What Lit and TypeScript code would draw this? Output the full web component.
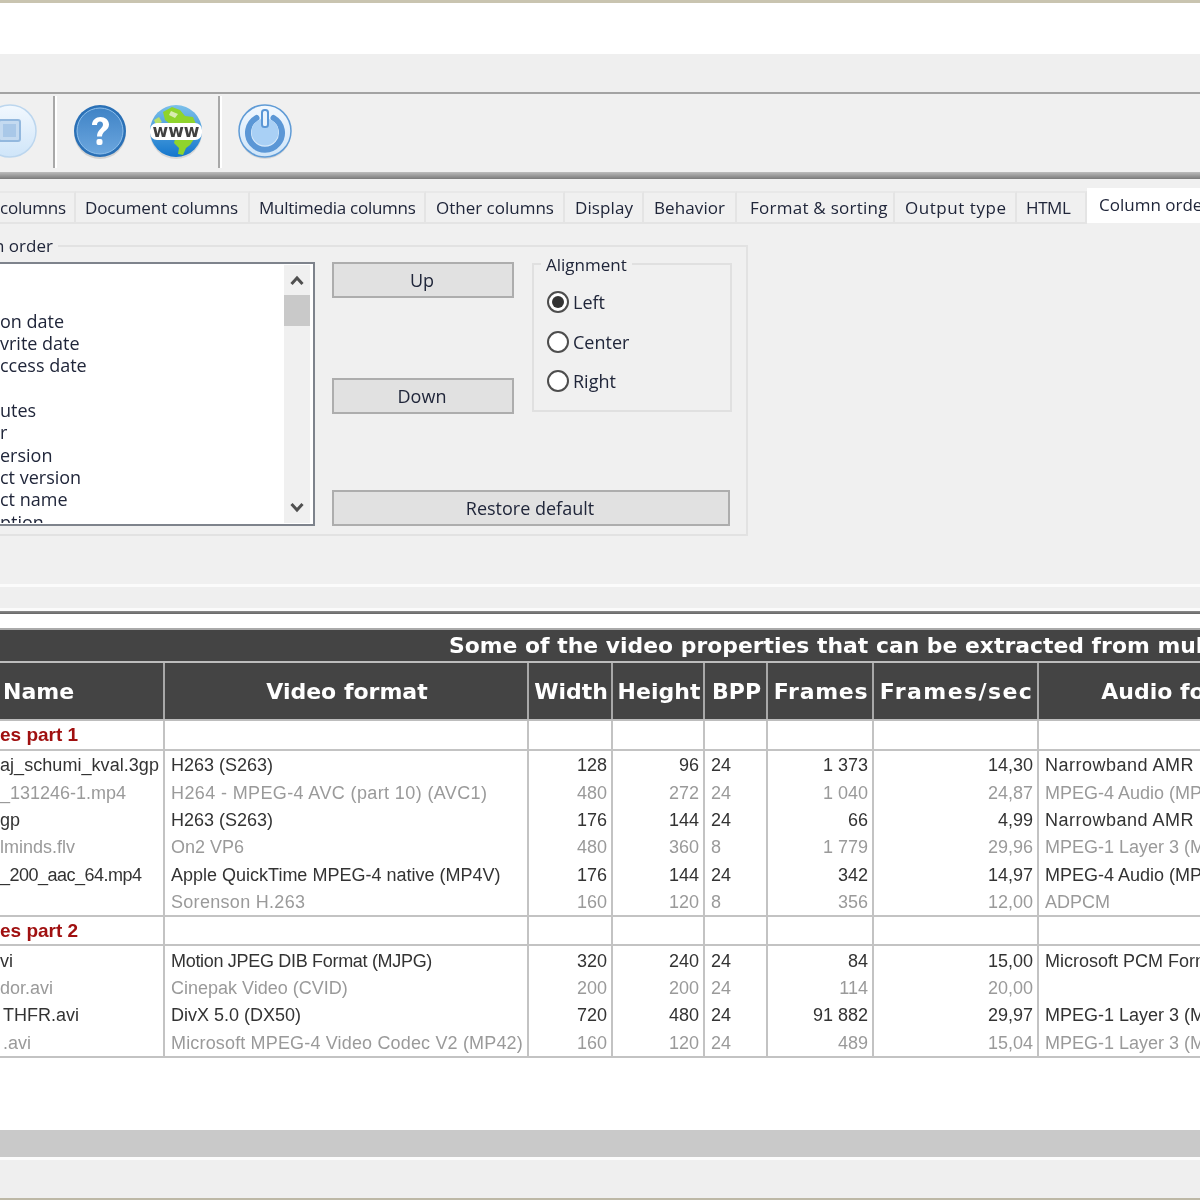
import { LitElement, html, css, svg } from "lit";
import { customElement } from "lit/decorators.js";

const TABS: [string, number, number, number][] = [
  ["columns", 76, 0, -0.2], ["Document columns", 174, 9, -0.1], ["Multimedia columns", 176, 9, -0.28], ["Other columns", 139, 10, 0],
  ["Display", 79, 10, 0.1], ["Behavior", 93, 10, 0.1], ["Format & sorting", 158, 13, 0.25], ["Output type", 122, 10, 0.55], ["HTML", 70, 9, -0.4],
];
const LIST: string[] = ["", "", "on date", "vrite date", "ccess date", "", "utes", "r", "ersion", "ct version", "ct name", "ption"];
const TRACK: Record<string, number> = {
  "H264 - MPEG-4 AVC (part 10) (AVC1)": 0.38,
  "Motion JPEG DIB Format (MJPG)": -0.31,
  "Microsoft MPEG-4 Video Codec V2 (MP42)": 0.16,
  "Sorenson H.263": 0.3,
  "Narrowband AMR (": 0.5,
  "_200_aac_64.mp4": -0.5,
  "aj_schumi_kval.3gp": 0.05,
};
type Row = [string, number, string, string, string, string, string, string, string];
const G1: Row[] = [
  ["aj_schumi_kval.3gp", 0, "H263 (S263)", "128", "96", "24", "1 373", "14,30", "Narrowband AMR ("],
  ["_131246-1.mp4", 0, "H264 - MPEG-4 AVC (part 10) (AVC1)", "480", "272", "24", "1 040", "24,87", "MPEG-4 Audio (MP"],
  ["gp", 0, "H263 (S263)", "176", "144", "24", "66", "4,99", "Narrowband AMR ("],
  ["lminds.flv", 0, "On2 VP6", "480", "360", "8", "1 779", "29,96", "MPEG-1 Layer 3 (M"],
  ["_200_aac_64.mp4", 0, "Apple QuickTime MPEG-4 native (MP4V)", "176", "144", "24", "342", "14,97", "MPEG-4 Audio (MP"],
  ["", 0, "Sorenson H.263", "160", "120", "8", "356", "12,00", "ADPCM"],
];
const G2: Row[] = [
  ["vi", 0, "Motion JPEG DIB Format (MJPG)", "320", "240", "24", "84", "15,00", "Microsoft PCM Forn"],
  ["dor.avi", 0, "Cinepak Video (CVID)", "200", "200", "24", "114", "20,00", ""],
  ["THFR.avi", 3, "DivX 5.0 (DX50)", "720", "480", "24", "91 882", "29,97", "MPEG-1 Layer 3 (M"],
  [".avi", 3, "Microsoft MPEG-4 Video Codec V2 (MP42)", "160", "120", "24", "489", "15,04", "MPEG-1 Layer 3 (M"],
];

const defs = svg`<defs>
  <linearGradient id="blueIn" x1="0" y1="0" x2="0" y2="1"><stop offset="0" stop-color="#3f83c6"/><stop offset="1" stop-color="#6ba6de"/></linearGradient>
  <linearGradient id="sea" x1="0" y1="0" x2="0" y2="1"><stop offset="0" stop-color="#7cc0ea"/><stop offset="1" stop-color="#1476cc"/></linearGradient>
  <linearGradient id="pale" x1="0" y1="0" x2="0" y2="1"><stop offset="0" stop-color="#f2f8fe"/><stop offset="1" stop-color="#cfe5f9"/></linearGradient>
</defs>`;

@customElement("app-root")
export class AppRoot extends LitElement {
  static styles = css`
    :host { display: block; width: 1200px; height: 1200px; overflow: hidden; background: #fff; font-family: "Open Sans", sans-serif; color: #20263a; filter: blur(0.45px); }
    .edge { height: 3px; background: #c9c4b0; }
    .white-top { height: 51px; background: #fff; }
    .menu { height: 38px; background: #efefef; }
    .toolbar { height: 80px; box-sizing: border-box; background: #f0f0f0; border-top: 2px solid #a3a3a3; padding-bottom: 4px; display: flex; align-items: center; }
    .toolbar svg { flex: none; display: block; width: 54px; height: 56px; }
    .sep { flex: none; width: 2px; height: 72px; background: #a8a8a8; border-right: 2px solid #fff; margin-top: 1px; }
    .i0 { margin-left: -17px; }
    .s1 { margin-left: 16px; }
    .i1 { margin-left: 16px; }
    .i2 { margin-left: 22px; }
    .s2 { margin-left: 15px; }
    .i3 { margin-left: 16px; }
    .rule { height: 7px; background: linear-gradient(#bdbdbd, #7a7a7a); }
    .tabsbar { height: 66px; background: #f0f0f0; box-sizing: border-box; padding-top: 12px; display: flex; align-items: flex-start; font-size: 17px; white-space: nowrap; overflow: hidden; }
    .tab { flex: none; box-sizing: border-box; height: 33px; border: 2px solid #e4e4e4; border-left: none; border-top-color: #e8e8e8; line-height: 29px; }
    .tab.active { height: 35px; margin-top: -3px; background: #fff; border: none; width: 120px; padding-left: 12px; line-height: 33px; }
    .page { height: 339px; background: #f0f0f0; box-sizing: border-box; }
    .group { position: relative; box-sizing: border-box; width: 758px; height: 291px; margin-left: -10px; border: 2px solid #e2e2e2; font-size: 18px; display: flex; }
    .legend { position: absolute; top: -14px; left: 2px; padding: 0 5px 0 0; background: #f0f0f0; line-height: 26px; font-size: 17px; }
    .listbox { flex: none; box-sizing: border-box; width: 323px; height: 264px; margin-top: 15px; border: 2px solid #7e838c; background: #fff; display: flex; padding: 1px 3px 1px 0; }
    .items { flex: 1; overflow: hidden; line-height: 22.35px; white-space: nowrap; }
    .item { height: 22.35px; padding-left: 6px; }
    .scroll { flex: none; width: 26px; background: #f0f0f0; display: flex; flex-direction: column; }
    .scroll svg { display: block; width: 26px; height: 30px; flex: none; }
    .thumb { flex: none; height: 31px; background: #c9c9c9; }
    .spacer { flex: 1; }
    .mid { flex: none; position: relative; width: 398px; margin: 15px 0 0 17px; height: 264px; }
    .btns { display: flex; flex-direction: column; width: 398px; height: 264px; }
    .btn { box-sizing: border-box; height: 36px; width: 182px; background: #e1e1e1; border: 2px solid #adadad; text-align: center; line-height: 33px; padding-right: 2px; }
    .btn + .btn { margin-top: 80px; }
    .btn.wide { width: 398px; margin-top: 76px; }
    .align { position: absolute; top: 1px; left: 200px; box-sizing: border-box; width: 200px; height: 149px; border: 2px solid #e0e0e0; }
    .align .legend { left: 7px; padding: 0 5px; top: -13px; }
    .radios { display: flex; flex-direction: column; gap: 17.5px; padding: 26px 0 0 13px; }
    .radio { display: flex; align-items: center; gap: 4px; height: 22px; line-height: 22px; }
    .dot { flex: none; box-sizing: border-box; width: 22px; height: 22px; border-radius: 50%; border: 2px solid #4d4d4d; background: #fff; display: flex; align-items: center; justify-content: center; }
    .dot.on::after { content: ""; width: 12px; height: 12px; border-radius: 50%; background: #333; }
    .lines { height: 27px; background: #efefef; box-sizing: border-box; border-top: 3px solid #fbfbfb; border-bottom: 3px solid #fbfbfb; }
    .dark { height: 3px; background: linear-gradient(#8a8a8a, #666); }
    .sheet { height: 516px; background: #fff; box-sizing: border-box; padding-top: 14px; overflow: hidden; }
    table { border-collapse: collapse; table-layout: fixed; width: 1326px; margin-left: -2px; font-family: "Liberation Sans", sans-serif; font-size: 18px; color: #333; }
    td, th { border-left: 2px solid #c3c3c3; border-right: 2px solid #c3c3c3; padding: 0 4px 0 6px; white-space: nowrap; overflow: hidden; }
    th { background: #444; color: #fff; font-family: "DejaVu Sans", sans-serif; font-size: 22px; font-weight: 700; border-color: #a8a8a8; border-bottom: 2px solid #bdbdbd; padding: 0 0 0 2px; text-align: center; }
    .title th { height: 31px; text-align: left; padding-left: 449px; font-size: 21.9px; border-top: 2px solid #aaa; }
    .head th { height: 56px; }
    .head th.name { text-align: left; padding-left: 3px; }
    .head th.sp1 { letter-spacing: 0.7px; }
    .head th.sp2 { letter-spacing: 1.4px; }
    .gr td { height: 28px; font-weight: 700; font-size: 19px; color: #a01010; border-bottom: 2px solid #c3c3c3; border-top: 2px solid #c3c3c3; }
    .gr.short td { height: 27px; }
    .d td { height: 26.4px; padding-top: 1px; line-height: 20px; }
    .d.alt td { color: #9a9a9a; }
    .d:last-child td { border-bottom: 2px solid #c3c3c3; }
    .n { text-align: right; }
    td.first { padding-left: 0; }
    .bar { height: 27px; background: #c9c9c9; }
    .wl { height: 3px; background: #fbfbfb; }
    .status { height: 38px; background: #efefef; }
    .edge2 { height: 2px; background: #bdb8a6; }
  `;

  renderIcon0() {
    return html`<svg class="i0" viewBox="0 0 54 56">${defs}
      <circle cx="27" cy="28" r="26" fill="url(#pale)" stroke="#bcd6ee" stroke-width="1.5"/>
      <rect x="16" y="17" width="21" height="21" rx="2" fill="#c4daf0" stroke="#93b8de" stroke-width="2"/>
      <rect x="20" y="21" width="13" height="13" fill="#a9c8e8"/>
    </svg>`;
  }
  renderHelp() {
    return html`<svg class="i1" viewBox="0 0 54 56">${defs}
      <ellipse cx="27" cy="30" rx="26" ry="26" fill="#000" opacity=".12"/>
      <circle cx="27" cy="28" r="26" fill="#2a70b6"/>
      <circle cx="27" cy="28" r="23" fill="url(#blueIn)" stroke="#8fc0ec" stroke-width="1"/>
      <path d="M19 22c0-5 4-8 8.500-8s8.500 3 8.500 7.500c0 6-7 6.500-7 12h-5c0-7 6-8 6-12 0-1.800-1.200-3-3-3s-3 1.500-3 3.500z" fill="#fff"/>
      <rect x="23.500" y="36" width="6" height="6" rx="2" fill="#fff"/>
    </svg>`;
  }
  renderGlobe() {
    return html`<svg class="i2" viewBox="0 0 54 56">${defs}
      <ellipse cx="27" cy="30" rx="26" ry="26" fill="#000" opacity=".1"/>
      <circle cx="27" cy="28" r="26" fill="url(#sea)"/>
      <path d="M14 9l9-5 8 3 5 6 8 1 3 7-6 2-4-3-4 3-7-3-5 1-5-4z" fill="#8fd42c"/>
      <path d="M22 8l7 3-3 4-6-3z" fill="#d9ecb0"/>
      <path d="M26 36l14-1 5 1-4 6-4 3-3 7-5-1 1-6-5-5z" fill="#8fd42c"/>
      <path d="M5 17l5-3 3 5-6 3z" fill="#b6e06a"/>
      <rect x="1" y="20" width="52" height="17" rx="7" fill="#fff"/>
      <text x="27" y="34" text-anchor="middle" font-family="DejaVu Sans, sans-serif" font-size="17" font-weight="700" fill="#404040" textLength="47" lengthAdjust="spacingAndGlyphs">www</text>
    </svg>`;
  }
  renderPower() {
    return html`<svg class="i3" viewBox="0 0 54 56">${defs}
      <ellipse cx="27" cy="30" rx="26" ry="26" fill="#000" opacity=".1"/>
      <circle cx="27" cy="28" r="26" fill="url(#pale)" stroke="#5f9bd6" stroke-width="1.5"/>
      <path d="M18.500 15a17 17 0 1 0 17 0" fill="none" stroke="#5b97d6" stroke-width="6" stroke-linecap="round"/>
      <circle cx="27" cy="29" r="13.500" fill="#a9d0f5"/>
      <rect x="24" y="7" width="6" height="17" rx="2.500" fill="#eaf4fd" stroke="#5b97d6" stroke-width="2"/>
    </svg>`;
  }

  track(t: string) {
    return html`<span style="letter-spacing:${TRACK[t] ?? 0}px">${t}</span>`;
  }
  renderRow(r: Row, alt: boolean) {
    return html`<tr class="d ${alt ? "alt" : ""}">
      <td class="first"><span style="margin-left:${r[1]}px;letter-spacing:${TRACK[r[0]] ?? 0}px">${r[0]}</span></td>
      <td>${this.track(r[2])}</td><td class="n">${r[3]}</td><td class="n">${r[4]}</td><td>${r[5]}</td><td class="n">${r[6]}</td><td class="n">${r[7]}</td><td>${this.track(r[8])}</td>
    </tr>`;
  }
  renderGroup(t: string, short = false) {
    return html`<tr class="gr ${short ? "short" : ""}"><td class="first">${t}</td><td></td><td></td><td></td><td></td><td></td><td></td><td></td></tr>`;
  }

  render() {
    return html`
      <div class="edge"></div><div class="white-top"></div><div class="menu"></div>
      <div class="toolbar">
        ${this.renderIcon0()}<div class="sep s1"></div>${this.renderHelp()}${this.renderGlobe()}<div class="sep s2"></div>${this.renderPower()}
      </div>
      <div class="rule"></div>
      <div class="tabsbar">
        ${TABS.map(([t, w, p, s]) => html`<div class="tab" style="width:${w}px;padding-left:${p}px;letter-spacing:${s}px">${t}</div>`)}
        <div class="tab active">Column order</div>
      </div>
      <div class="page">
        <div class="group">
          <div class="legend">n order</div>
          <div class="listbox">
            <div class="items">${LIST.map((t) => html`<div class="item">${t}</div>`)}</div>
            <div class="scroll">
              <svg viewBox="0 0 26 30"><path d="M7.500 19l5.500-6 5.500 6" fill="none" stroke="#505050" stroke-width="3"/></svg>
              <div class="thumb"></div><div class="spacer"></div>
              <svg viewBox="0 0 26 30"><path d="M7.500 11l5.500 6 5.500-6" fill="none" stroke="#505050" stroke-width="3"/></svg>
            </div>
          </div>
          <div class="mid">
            <div class="btns">
              <div class="btn">Up</div><div class="btn">Down</div><div class="btn wide">Restore default</div>
            </div>
            <div class="align">
              <div class="legend">Alignment</div>
              <div class="radios">
                <div class="radio"><span class="dot on"></span>Left</div>
                <div class="radio"><span class="dot"></span>Center</div>
                <div class="radio"><span class="dot"></span>Right</div>
              </div>
            </div>
          </div>
        </div>
      </div>
      <div class="lines"></div>
      <div class="dark"></div>
      <div class="sheet">
        <table>
          <colgroup><col style="width:165px"/><col style="width:364px"/><col style="width:84px"/><col style="width:92px"/><col style="width:63px"/><col style="width:106px"/><col style="width:165px"/><col style="width:287px"/></colgroup>
          <tr class="title"><th colspan="8">Some of the video properties that can be extracted from multimedia files</th></tr>
          <tr class="head"><th class="name">Name</th><th>Video format</th><th>Width</th><th>Height</th><th>BPP</th><th class="sp1">Frames</th><th class="sp2">Frames/sec</th><th>Audio format</th></tr>
          ${this.renderGroup("es part 1")}
          ${G1.map((r, i) => this.renderRow(r, i % 2 === 1))}
          ${this.renderGroup("es part 2", true)}
          ${G2.map((r, i) => this.renderRow(r, i % 2 === 1))}
        </table>
      </div>
      <div class="bar"></div><div class="wl"></div><div class="status"></div><div class="edge2"></div>
    `;
  }
}
